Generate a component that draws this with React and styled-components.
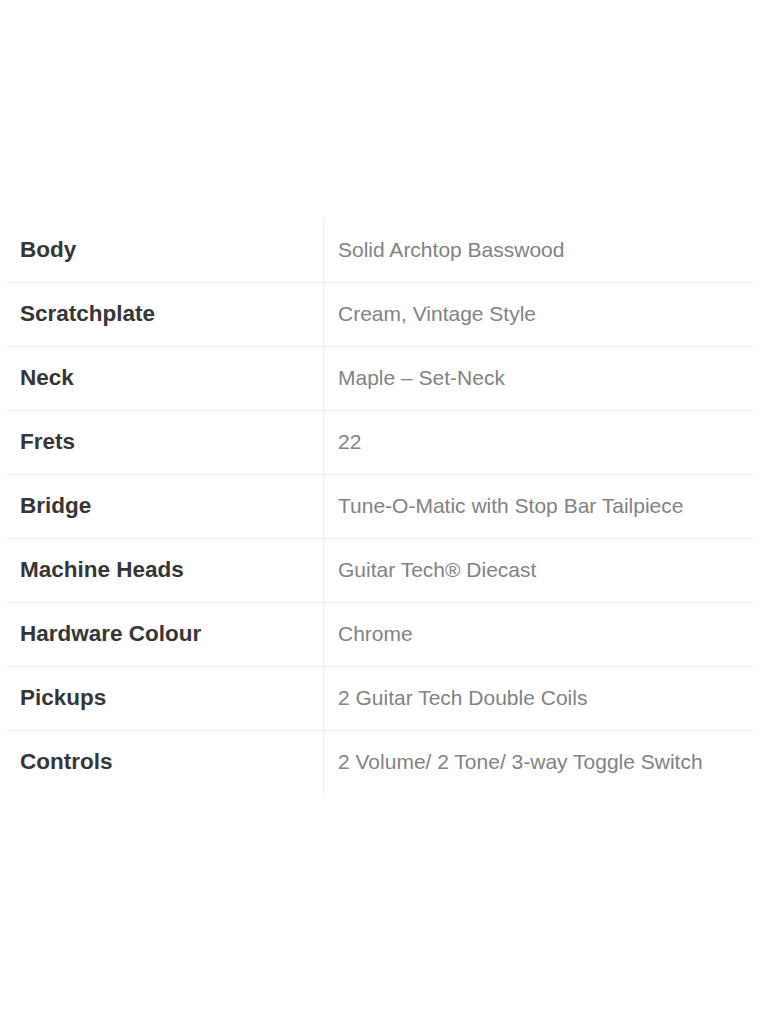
import React from "react";
import styled, { createGlobalStyle } from "styled-components";

const Global = createGlobalStyle`
  html, body {
    margin: 0;
    padding: 0;
    background: #fff;
    font-family: "Liberation Sans", Arial, sans-serif;
  }
`;

const Page = styled.div`
  width: 760px;
  padding: 218px 7px 0 7px;
  box-sizing: border-box;
`;

const Table = styled.table`
  width: 746px;
  border-collapse: collapse;
  table-layout: fixed;
`;

const Row = styled.tr`
  height: 64px;
  border-top: ${(p) => (p.$first ? "none" : "1px solid #eeeeee")};
`;

const Label = styled.th`
  width: 303px;
  padding: 0 0 0 13px;
  text-align: left;
  font-size: 22.5px;
  font-weight: 700;
  color: #353535;
  border-right: 1px solid #eeeeee;
  vertical-align: middle;
`;

const Value = styled.td`
  padding: 0 0 0 14px;
  font-size: 21px;
  color: #828282;
  vertical-align: middle;
`;

const specs = [
  ["Body", "Solid Archtop Basswood"],
  ["Scratchplate", "Cream, Vintage Style"],
  ["Neck", "Maple – Set-Neck"],
  ["Frets", "22"],
  ["Bridge", "Tune-O-Matic with Stop Bar Tailpiece"],
  ["Machine Heads", "Guitar Tech® Diecast"],
  ["Hardware Colour", "Chrome"],
  ["Pickups", "2 Guitar Tech Double Coils"],
  ["Controls", "2 Volume/ 2 Tone/ 3-way Toggle Switch"],
];

const App = () => (
  <>
    <Global />
    <Page>
      <Table>
        <tbody>
          {specs.map(([k, v], i) => (
            <Row key={k} $first={i === 0}>
              <Label>{k}</Label>
              <Value>{v}</Value>
            </Row>
          ))}
        </tbody>
      </Table>
    </Page>
  </>
);

export default App;
